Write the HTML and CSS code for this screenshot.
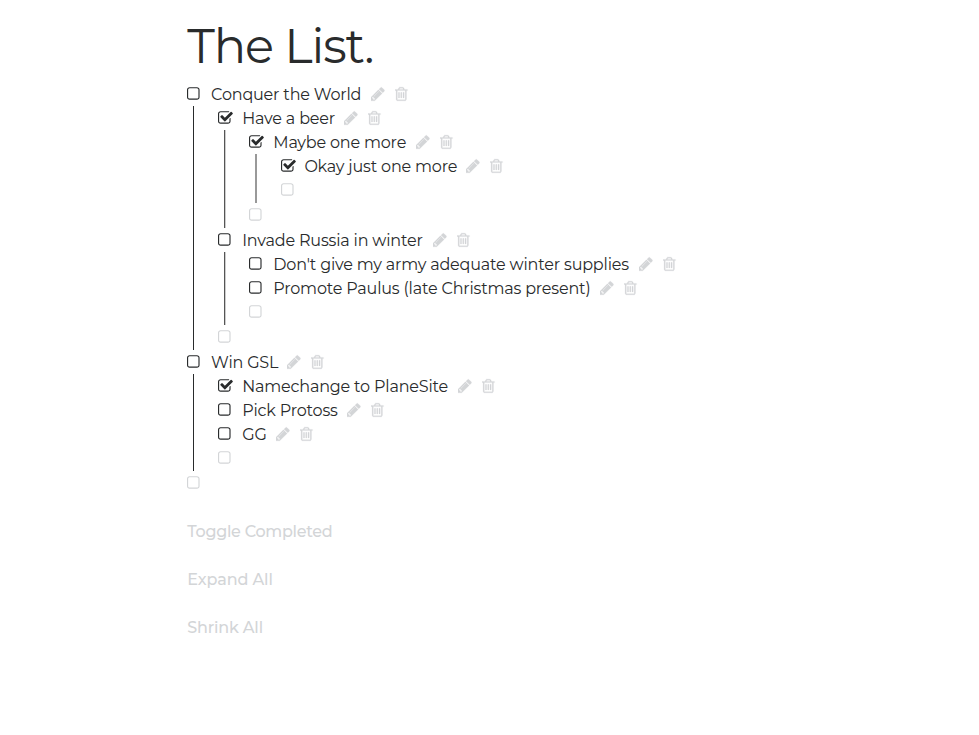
FILE: index.html
```html
<!DOCTYPE html>
<html lang="en">
<head>
<meta charset="utf-8">
<title>The List.</title>
<link rel="stylesheet" href="styles.css">
</head>
<body>
<svg class="defs" aria-hidden="true">
<symbol id="box" viewBox="192 0 1792 1792"><path d="M1312 256h-832q-66 0-113 47t-47 113v832q0 66 47 113t113 47h832q66 0 113-47t47-113v-832q0-66-47-113t-113-47zm288 160v832q0 119-84.5 203.5t-203.5 84.5h-832q-119 0-203.5-84.5t-84.5-203.5v-832q0-119 84.5-203.5t203.5-84.5h832q119 0 203.5 84.5t84.5 203.5z"/></symbol>
<symbol id="check" viewBox="64 0 1792 1792"><path d="M1472 930v318q0 119-84.5 203.5t-203.5 84.5h-832q-119 0-203.5-84.5t-84.5-203.5v-832q0-119 84.5-203.5t203.5-84.5h832q63 0 117 25 15 7 18 23 3 17-9 29l-49 49q-10 10-23 10-3 0-9-2-23-6-45-6h-832q-66 0-113 47t-47 113v832q0 66 47 113t113 47h832q66 0 113-47t47-113v-254q0-13 9-22l64-64q10-10 23-10 6 0 12 3 20 8 20 29zm231-489l-814 814q-24 24-57 24t-57-24l-430-430q-24-24-24-57t24-57l110-110q24-24 57-24t57 24l263 263 647-647q24-24 57-24t57 24l110 110q24 24 24 57t-24 57z"/></symbol>
<symbol id="pencil" viewBox="128 0 1792 1792"><path d="M491 1536l91-91-235-235-91 91v107h128v128h107zm523-928q0-22-22-22-10 0-17 7l-542 542q-7 7-7 17 0 22 22 22 10 0 17-7l542-542q7-7 7-17zm-54-192l416 416-832 832h-416v-416zm683 96q0 53-37 90l-166 166-416-416 166-165q36-38 90-38 53 0 91 38l235 234q37 39 37 91z"/></symbol>
<symbol id="trash" viewBox="192 0 1792 1792"><path d="M704 736v576q0 14-9 23t-23 9h-64q-14 0-23-9t-9-23v-576q0-14 9-23t23-9h64q14 0 23 9t9 23zm256 0v576q0 14-9 23t-23 9h-64q-14 0-23-9t-9-23v-576q0-14 9-23t23-9h64q14 0 23 9t9 23zm256 0v576q0 14-9 23t-23 9h-64q-14 0-23-9t-9-23v-576q0-14 9-23t23-9h64q14 0 23 9t9 23zm128 724v-948h-896v948q0 22 7 40.5t14.5 27 10.5 8.5h832q3 0 10.5-8.5t14.5-27 7-40.5zm-672-1076h448l-48-117q-7-9-17-11h-317q-10 2-17 11zm928 32v64q0 14-9 23t-23 9h-96v948q0 83-47 143.5t-113 60.5h-832q-66 0-113-58.5t-47-141.5v-952h-96q-14 0-23-9t-9-23v-64q0-14 9-23t23-9h309l70-167q15-37 54-63t79-26h320q40 0 79 26t54 63l70 167h309q14 0 23 9t9 23z"/></symbol>
</svg>
<main class="page">
<h1 class="title">The List.</h1>
<ul class="list">
  <li><div class="row"><svg class="icon tick"><use href="#box"/></svg><span class="label conquer">Conquer the World</span><svg class="icon tool"><use href="#pencil"/></svg><svg class="icon tool"><use href="#trash"/></svg></div>
    <ul class="list nested">
      <li><div class="row"><svg class="icon tick"><use href="#check"/></svg><span class="label beer">Have a beer</span><svg class="icon tool"><use href="#pencil"/></svg><svg class="icon tool"><use href="#trash"/></svg></div>
        <ul class="list nested second">
          <li><div class="row"><svg class="icon tick"><use href="#check"/></svg><span class="label maybe">Maybe one more</span><svg class="icon tool"><use href="#pencil"/></svg><svg class="icon tool"><use href="#trash"/></svg></div>
            <ul class="list nested third">
              <li><div class="row"><svg class="icon tick"><use href="#check"/></svg><span class="label okay">Okay just one more</span><svg class="icon tool"><use href="#pencil"/></svg><svg class="icon tool"><use href="#trash"/></svg></div></li>
              <li class="row new"><svg class="icon"><use href="#box"/></svg></li>
            </ul></li>
          <li class="row new"><svg class="icon"><use href="#box"/></svg></li>
        </ul></li>
      <li><div class="row"><svg class="icon tick"><use href="#box"/></svg><span class="label invade">Invade Russia in winter</span><svg class="icon tool"><use href="#pencil"/></svg><svg class="icon tool"><use href="#trash"/></svg></div>
        <ul class="list nested second">
          <li><div class="row"><svg class="icon tick"><use href="#box"/></svg><span class="label army">Don't give my army adequate winter supplies</span><svg class="icon tool"><use href="#pencil"/></svg><svg class="icon tool"><use href="#trash"/></svg></div></li>
          <li><div class="row"><svg class="icon tick"><use href="#box"/></svg><span class="label paulus">Promote Paulus (late Christmas present)</span><svg class="icon tool"><use href="#pencil"/></svg><svg class="icon tool"><use href="#trash"/></svg></div></li>
          <li class="row new"><svg class="icon"><use href="#box"/></svg></li>
        </ul></li>
      <li class="row new"><svg class="icon"><use href="#box"/></svg></li>
    </ul></li>
  <li><div class="row"><svg class="icon tick"><use href="#box"/></svg><span class="label gsl">Win GSL</span><svg class="icon tool"><use href="#pencil"/></svg><svg class="icon tool"><use href="#trash"/></svg></div>
    <ul class="list nested">
      <li><div class="row"><svg class="icon tick"><use href="#check"/></svg><span class="label namechange">Namechange to PlaneSite</span><svg class="icon tool"><use href="#pencil"/></svg><svg class="icon tool"><use href="#trash"/></svg></div></li>
      <li><div class="row"><svg class="icon tick"><use href="#box"/></svg><span class="label protoss">Pick Protoss</span><svg class="icon tool"><use href="#pencil"/></svg><svg class="icon tool"><use href="#trash"/></svg></div></li>
      <li><div class="row"><svg class="icon tick"><use href="#box"/></svg><span class="label gg">GG</span><svg class="icon tool"><use href="#pencil"/></svg><svg class="icon tool"><use href="#trash"/></svg></div></li>
      <li class="row new"><svg class="icon"><use href="#box"/></svg></li>
    </ul></li>
  <li class="row new"><svg class="icon"><use href="#box"/></svg></li>
</ul>
<nav class="actions"><a class="toggle">Toggle Completed</a><a class="expand">Expand All</a><a class="shrink">Shrink All</a></nav>
</main>
</body>
</html>
```
FILE: styles.css
```css
body {
  margin: 0;
  background: #fff;
  color: #292b2c;
  font: 16px/24px Montserrat, Inter, sans-serif;
  letter-spacing: -0.18px;
}
.defs { display: none; }
.page { padding: 12px 0 0 187.3px; }
.title {
  margin: 0;
  height: 70px;
  font-size: 48px;
  line-height: 69px;
  font-weight: 450;
  letter-spacing: -1.15px;
  white-space: nowrap;
}
.list { list-style: none; margin: 0; padding: 0; }
.nested {
  --line: linear-gradient(#292b2c, #292b2c);
  padding-left: 31.1px;
  background: var(--line) 6px 0 / 1px 100% no-repeat;
}
.second { --line: linear-gradient(90deg, #555 50%, #ccc 50%); background-size: 2px 100%; }
.third { --line: linear-gradient(#999, #999); background-size: 2px 100%; }
.row { display: flex; align-items: center; height: 24px; }
.new { height: 25px; color: #d3d5d7; }
.new .icon { margin-bottom: 2px; }
.icon { display: block; flex: none; width: 16px; height: 16px; fill: currentColor; overflow: visible; }
.tick { margin-right: 7.8px; }
.tool { margin: 0 -2.3px 0 10px; color: #d3d5d7; stroke: #d3d5d7; stroke-width: 24px; }
.label { white-space: nowrap; flex: none; padding-top: 2px; }
.conquer { width: 150px; }
.beer { width: 92px; }
.maybe { width: 132.7px; }
.okay { width: 152px; }
.invade { width: 181px; }
.army { width: 356px; }
.paulus { width: 317px; }
.gsl { width: 66px; }
.namechange { width: 206px; }
.protoss { width: 95px; }
.gg { width: 24px; letter-spacing: 0; }
.actions { display: flex; flex-direction: column; gap: 24px; margin-top: 24px; color: #d3d5d7; font-weight: 500; }
.toggle { letter-spacing: -0.28px; }
.expand { letter-spacing: -0.1px; }
```
